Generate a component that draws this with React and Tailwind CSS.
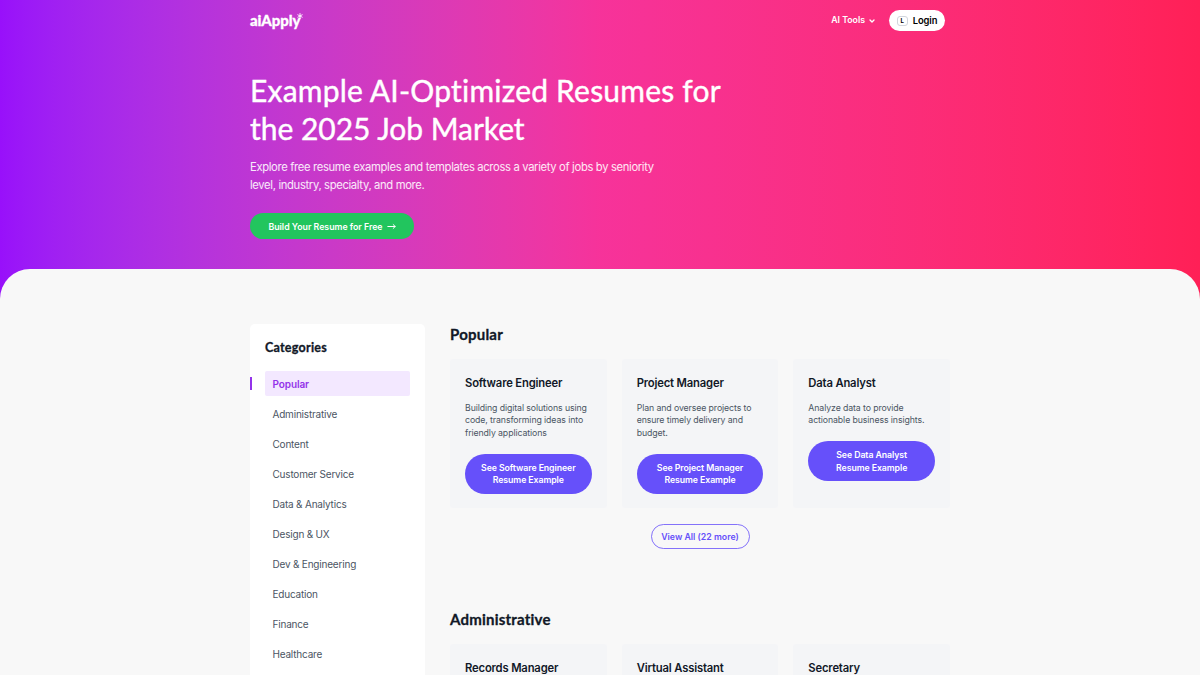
import React, { useState } from 'react';
import { ChevronDown } from 'lucide-react';

const categories = [
    'Popular',
    'Administrative',
    'Content',
    'Customer Service',
    'Data & Analytics',
    'Design & UX',
    'Dev & Engineering',
    'Education',
    'Finance',
    'Healthcare',
];

const sections = [
    {
        name: 'Popular',
        more: 22,
        jobs: [
            { title: 'Software Engineer', text: 'Building digital solutions using code, transforming ideas into friendly applications' },
            { title: 'Project Manager', text: 'Plan and oversee projects to ensure timely delivery and budget.' },
            { title: 'Data Analyst', text: 'Analyze data to provide actionable business insights.' },
        ],
    },
    {
        name: 'Administrative',
        jobs: [
            { title: 'Records Manager' },
            { title: 'Virtual Assistant' },
            { title: 'Secretary' },
        ],
    },
];

function Logo() {
    return (
        <div className="relative h-[18px] w-[53px] font-['Lato',sans-serif] text-[15px] leading-[18px] font-black tracking-[-0.1px] text-white [-webkit-text-stroke:0.3px_white]">
            aiApply
            <svg className="absolute top-[2px] right-0 h-[6px] w-[6px]" viewBox="0 0 6 6" stroke="white" strokeWidth="0.9" strokeLinecap="round">
                <path d="M3 .5v5M.8 1.8l4.4 2.4M.8 4.2l4.4-2.4" />
            </svg>
        </div>
    );
}

function Header() {
    return (
        <header className="flex h-10 items-center justify-between pr-[5px]">
            <Logo />
            <nav className="flex items-center">
                <a className="flex items-center gap-[3px] pt-px text-[8.75px] font-semibold text-white">
                    AI Tools
                    <ChevronDown className="h-2 w-2" strokeWidth={4} />
                </a>
                <button className="ml-[13px] flex h-[21px] w-14 items-center justify-center gap-[5px] rounded-full bg-white pt-0.5 text-[9.4px] font-semibold tracking-[-0.1px] text-black">
                    <span className="-mt-px flex h-[10px] w-[11px] items-center justify-center rounded-[3px] border border-gray-300 text-[6px] leading-none font-bold">L</span>
                    Login
                </button>
            </nav>
        </header>
    );
}

function Hero() {
    return (
        <div className="pt-8">
            <h1 className="w-[520px] font-['Lato',sans-serif] text-[30px] leading-[37.5px] whitespace-nowrap text-white [-webkit-text-stroke:0.4px_white]">
                <span className="tracking-[0.2px]">Example AI-Optimized Resumes for</span>
                <br />
                <span className="tracking-[-0.03px]">the 2025 Job Market</span>
            </h1>
            <p className="mt-3 w-[420px] text-[11.25px] leading-[17.5px] tracking-[-0.35px] text-white/90">
                Explore free resume examples and templates across a variety of jobs by seniority level, industry, specialty, and more.
            </p>
            <button className="mt-[19px] flex h-[26px] w-[164px] items-center justify-center gap-1 rounded-full bg-[#22c55e] pt-[3px] text-[8.75px] font-semibold text-white">
                Build Your Resume for Free
                <svg className="-mt-0.5 h-[9px] w-[9px]" viewBox="0 0 9 9" fill="none" stroke="currentColor" strokeWidth="1" strokeLinecap="round" strokeLinejoin="round">
                    <path d="M.8 4.5h7.4M6.2 2.6l2 1.9-2 1.9" />
                </svg>
            </button>
        </div>
    );
}

function Sidebar() {
    const [active, setActive] = useState('Popular');

    return (
        <aside className="h-[500px] w-[175px] shrink-0 rounded-[5px] bg-white p-[15px]">
            <h2 className="font-['Lato',sans-serif] text-[12.5px] leading-[17.5px] font-bold tracking-[0.25px] text-[#111827] [-webkit-text-stroke:0.3px_#111827]">Categories</h2>
            <ul className="mt-[15px] flex flex-col gap-[5px]">
                {categories.map((name) => (
                    <li key={name} className="relative">
                        {active === name && (
                            <span className="absolute top-[6px] -left-[15px] h-[12.5px] w-[2px] bg-[#9333ea]" />
                        )}
                        <button
                            onClick={() => setActive(name)}
                            className={`flex h-[25px] w-full items-center rounded-[2px] px-[7.5px] pt-px text-[10px] ${active === name ? 'bg-[#f3e8ff] font-semibold tracking-[-0.1px] text-[#9333ea]' : 'tracking-[-0.2px] text-[#4b5563]'}`}
                        >
                            {name}
                        </button>
                    </li>
                ))}
            </ul>
        </aside>
    );
}

function JobCard({ job }) {
    return (
        <div className="h-[149px] rounded-[3px] bg-[#f4f5f7] p-[15px]">
            <h3 className="pt-px text-[11.25px] leading-[16.5px] font-semibold tracking-[-0.17px] text-[#111827]">{job.title}</h3>
            {job.text && (
                <>
                    <p className="mt-[10.5px] text-[8.75px] leading-[12.5px] tracking-[-0.1px] text-[#4b5563]">{job.text}</p>
                    <button className="mt-[14.5px] w-full rounded-full bg-[#6650fa] pt-2 pb-[7px] text-center text-[8.75px] leading-[12.5px] font-semibold tracking-[-0.08px] text-white">
                        See {job.title}
                        <br />
                        Resume Example
                    </button>
                </>
            )}
        </div>
    );
}

function Section({ section }) {
    return (
        <section className="h-[285px]">
            <h2 className="font-['Lato',sans-serif] text-[15px] leading-5 font-bold tracking-[0.22px] text-[#111827] [-webkit-text-stroke:0.3px_#111827]">{section.name}</h2>
            <div className="mt-[15px] grid grid-cols-3 gap-[15px]">
                {section.jobs.map((job) => (
                    <JobCard key={job.title} job={job} />
                ))}
            </div>
            {section.more && (
                <div className="mt-4 flex justify-center">
                    <button className="h-[25px] w-[99px] rounded-full border border-[#6650fa]/80 pt-[3px] text-[8.75px] font-semibold text-[#6650fa]">
                        View All ({section.more} more)
                    </button>
                </div>
            )}
        </section>
    );
}

function App() {
    return (
        <div className="h-[675px] overflow-hidden bg-gradient-to-r from-purple-600 via-pink-500 to-rose-500 font-['Inter',sans-serif]">
            <div className="mx-auto h-[268.5px] w-[700px]">
                <Header />
                <Hero />
            </div>
            <main className="h-[407px] rounded-t-[30px] bg-[#f8f8f8] pt-[55px]">
                <div className="mx-auto flex w-[700px] gap-[25px]">
                    <Sidebar />
                    <div className="w-[500px]">
                        {sections.map((section) => (
                            <Section key={section.name} section={section} />
                        ))}
                    </div>
                </div>
            </main>
        </div>
    );
}

export default App;
